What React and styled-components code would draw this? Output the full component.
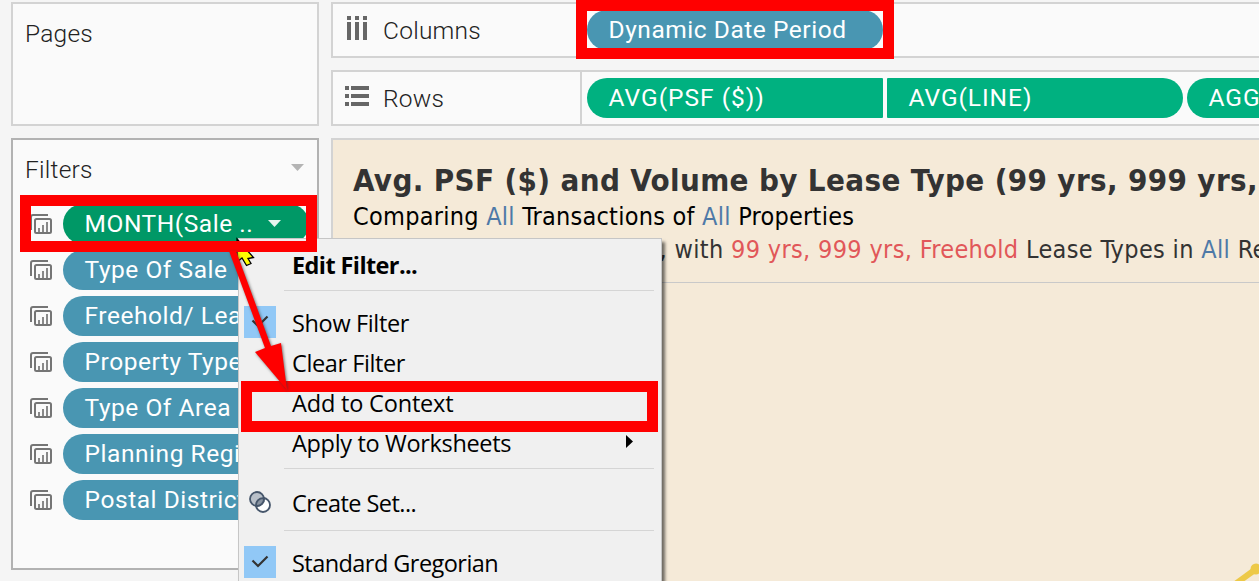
import React from "react";
import styled, { createGlobalStyle, css } from "styled-components";

const RED = "#ff0000";

const Global = createGlobalStyle`
  * { box-sizing: border-box; }
  body { margin: 0; background: #f5f5f5; overflow: hidden; }
`;

const Workspace = styled.div`
  position: relative;
  width: 1259px;
  height: 581px;
  overflow: hidden;
  background: #f5f5f5;
  padding: 2px 0 0 11px;
  display: grid;
  grid-template-columns: 308px 1fr;
  column-gap: 12px;
  white-space: nowrap;
  font-family: Roboto, "Liberation Sans", sans-serif;
`;

const SideColumn = styled.div`
  display: flex;
  flex-direction: column;
  gap: 12px;
`;

const MainColumn = styled.div`
  display: flex;
  flex-direction: column;
  gap: 12px;
  min-width: 0;
`;

const Card = styled.section`
  height: ${(p) => p.$height}px;
  border: 2px solid ${(p) => (p.$active ? "#b2b2b2" : "#d3d3d3")};
  background: #fafafa;
`;

const CardHeader = styled.header`
  display: flex;
  align-items: center;
  justify-content: space-between;
  height: 36px;
  margin-top: ${(p) => p.$top}px;
  padding: 0 13px 0 12px;
  svg { margin-bottom: 5px; }
`;

const Label = styled.span`
  font-size: 24.5px;
  font-weight: 300;
  line-height: 36px;
  letter-spacing: 0.25px;
  color: #222;
`;

const FilterList = styled.div`
  display: flex;
  flex-direction: column;
  gap: 6px;
  margin-top: 16px;
  padding-left: 17px;
`;

const FilterRow = styled.div`
  display: flex;
  align-items: center;
  gap: 11px;
  height: 40px;
`;

const pillColors = { blue: "#4996b2", green: "#00b180", dark: "#009866" };

const Pill = styled.div`
  display: flex;
  align-items: center;
  flex: none;
  gap: 15px;
  width: ${(p) => p.$width}px;
  height: 40px;
  padding: 0 0 1px 21.6px;
  border-radius: ${(p) => p.$radius || "20px"};
  background: ${(p) => pillColors[p.$tone]};
  color: #fff;
  font-size: 24.5px;
  line-height: 39px;
  letter-spacing: ${(p) => p.$track ?? 0.54}px;
`;

const Shelf = styled.section`
  display: flex;
  height: 56px;
  border: 2px solid #d3d3d3;
  border-right: 0;
  background: #fafafa;
`;

const ShelfLabel = styled.div`
  display: flex;
  align-items: center;
  gap: 14px;
  width: 249px;
  flex: none;
  padding: 1px 0 0 12px;
  border-right: 2px solid #d3d3d3;
  svg { margin-top: -6px; }
`;

const ShelfPills = styled.div`
  display: flex;
  align-items: center;
  gap: 4px;
  padding-left: 5px;
`;

const View = styled.section`
  display: flex;
  flex-direction: column;
  height: 460px;
  border: 2px solid #d3d3d3;
  border-right: 0;
  background: #f5ead8;
  font-family: "DejaVu Sans Condensed", "DejaVu Sans", sans-serif;
`;

const TitleBlock = styled.div`
  height: 143px;
  padding: 22px 0 0 20px;
  border-bottom: 1px solid #c9c9c9;
`;

const Title = styled.h1`
  margin: 0;
  font-size: 31px;
  line-height: 37px;
  letter-spacing: 0.36px;
  color: #333;
`;

const Subtitle = styled.p`
  margin: 0;
  font-size: 25px;
  line-height: ${(p) => p.$line}px;
  letter-spacing: ${(p) => p.$track}px;
  color: ${(p) => p.$color};
  padding-left: ${(p) => p.$indent || 0}px;
`;

const Blue = styled.span`color: #4e79a7;`;
const Red = styled.span`color: #e15759;`;

const Plot = styled.div`
  display: flex;
  flex: 1;
  align-items: flex-start;
  justify-content: flex-end;
  padding-top: 279px;
`;

const Menu = styled.div`
  position: absolute;
  left: 238px;
  top: 238px;
  width: 424px;
  height: 380px;
  padding: 6px 7px 0 5px;
  border: 1px solid #c6c6c6;
  background: #f0f0f0;
  box-shadow: 3px 4px 3px rgba(0, 0, 0, 0.55);
  font-family: "Open Sans", "Noto Sans", sans-serif;
  font-size: 23.5px;
  color: #000;
`;

const MenuItem = styled.div`
  display: flex;
  align-items: center;
  height: 40px;
  line-height: 40px;
  letter-spacing: ${(p) => p.$track}px;
  ${(p) => p.$bold && css`font-weight: 700;`}
`;

const MenuIcon = styled.div`
  display: flex;
  align-items: center;
  justify-content: center;
  width: 32px;
  height: 32px;
  margin: 0 16px 2px 0;
  background: ${(p) => (p.$checked ? "#91c8f6" : "transparent")};
`;

const SubmenuArrow = styled.svg`
  margin: 0 21px 3px auto;
`;

const Separator = styled.div`
  height: 1px;
  margin: ${(p) => p.$above}px 0 ${(p) => p.$below}px 40px;
  background: #d5d5d5;
`;

const Highlight = styled.div`
  position: absolute;
  left: ${(p) => p.$x}px;
  top: ${(p) => p.$y}px;
  width: ${(p) => p.$w}px;
  height: ${(p) => p.$h}px;
  border: 11px solid ${RED};
`;

const Overlay = styled.svg`
  position: absolute;
  left: 220px;
  top: 230px;
  overflow: visible;
`;

const ArrowOverlay = styled(Overlay)`
  filter: drop-shadow(1.5px 1px 1.5px rgba(60, 60, 60, 0.7));
`;

const Caret = ({ color }) => (
  <svg width="13" height="7"><path d="M0 0H13L6.5 7Z" fill={color} /></svg>
);

const SheetsIcon = () => (
  <svg width="22" height="20" fill="none" stroke="#757575" strokeWidth="2">
    <path d="M1 16V3Q1 1 3 1H18" />
    <rect x="5" y="5" width="16" height="14" rx="1.5" />
    <path d="M9 18V14M13 18V11M17 18V8" strokeWidth="1.7" />
  </svg>
);

const ColumnsIcon = () => (
  <svg width="24" height="24" fill="#666">
    {[2, 10, 18].map((x) => (
      <path key={x} d={`M${x} 0h4v4h-4zM${x} 6h4v18h-4z`} />
    ))}
  </svg>
);

const RowsIcon = () => (
  <svg width="24" height="20" fill="#666">
    {[0, 8, 16].map((y) => (
      <path key={y} d={`M0 ${y}h4v4h-4zM6 ${y}h18v4h-18z`} />
    ))}
  </svg>
);

const CheckIcon = () => (
  <svg width="18" height="14" fill="none" stroke="#333" strokeWidth="2.2">
    <path d="M1.5 5.5L7 11L16.5 1.5" />
  </svg>
);

const SetIcon = () => (
  <svg width="22" height="22" stroke="#46566b" strokeWidth="1.8">
    <circle cx="14" cy="14" r="7" fill="#fff" />
    <circle cx="8" cy="8" r="7" fill="#b9c0c9" />
    <path d="M14.9 7.1A7 7 0 0 1 7.1 14.9A7 7 0 0 1 14.9 7.1Z" fill="#8993a1" />
  </svg>
);

const filters = [
  { name: "MONTH(Sale ..", tone: "dark", caret: true },
  { name: "Type Of Sale" },
  { name: "Freehold/ Leas.." },
  { name: "Property Type" },
  { name: "Type Of Area" },
  { name: "Planning Region" },
  { name: "Postal District" },
];

export default function App() {
  return (
    <Workspace>
      <Global />
      <SideColumn>
        <Card $height={124}>
          <CardHeader $top={12}><Label>Pages</Label></CardHeader>
        </Card>
        <Card $height={432} $active>
          <CardHeader $top={12}>
            <Label>Filters</Label>
            <Caret color="#b4b4b4" />
          </CardHeader>
          <FilterList>
            {filters.map((f) => (
              <FilterRow key={f.name}>
                <SheetsIcon />
                <Pill $tone={f.tone || "blue"} $width={246}>
                  {f.name}
                  {f.caret && <Caret color="#e6f5ef" />}
                </Pill>
              </FilterRow>
            ))}
          </FilterList>
        </Card>
      </SideColumn>

      <MainColumn>
        <Shelf>
          <ShelfLabel><ColumnsIcon /><Label>Columns</Label></ShelfLabel>
          <ShelfPills>
            <Pill $tone="blue" $width={296}>Dynamic Date Period</Pill>
          </ShelfPills>
        </Shelf>
        <Shelf>
          <ShelfLabel><RowsIcon /><Label>Rows</Label></ShelfLabel>
          <ShelfPills>
            <Pill $tone="green" $width={296} $radius="20px 1px 1px 20px" $track={1}>AVG(PSF ($))</Pill>
            <Pill $tone="green" $width={296} $radius="1px 20px 20px 1px" $track={0.95}>AVG(LINE)</Pill>
            <Pill $tone="green" $width={296} $track={0.9}>AGG</Pill>
          </ShelfPills>
        </Shelf>
        <View>
          <TitleBlock>
            <Title>Avg. PSF ($) and Volume by Lease Type (99 yrs, 999 yrs,</Title>
            <Subtitle $line={35} $track={0.25} $color="#000">
              Comparing <Blue>All</Blue> Transactions of <Blue>All</Blue> Properties
            </Subtitle>
            <Subtitle $line={31} $track={0.34} $color="#333" $indent={306.5}>
              , with <Red>99 yrs, 999 yrs, Freehold</Red> Lease Types in <Blue>All</Blue> Re
            </Subtitle>
          </TitleBlock>
          <Plot>
            <svg width="25" height="20" fill="#edc948">
              <path d="M0 23L22 7" stroke="#edc948" strokeWidth="6" />
              <circle cx="22" cy="7" r="5.5" />
            </svg>
          </Plot>
        </View>
      </MainColumn>

      <Menu>
        <MenuItem $bold $track={-0.6}><MenuIcon />Edit Filter...</MenuItem>
        <Separator $above={5} $below={12} />
        <MenuItem $track={-0.35}><MenuIcon $checked><CheckIcon /></MenuIcon>Show Filter</MenuItem>
        <MenuItem $track={-0.4}><MenuIcon />Clear Filter</MenuItem>
        <MenuItem $track={-0.18}><MenuIcon />Add to Context</MenuItem>
        <MenuItem $track={-0.33}>
          <MenuIcon />Apply to Worksheets
          <SubmenuArrow width="7" height="13"><path d="M0 0L7 6.5L0 13Z" /></SubmenuArrow>
        </MenuItem>
        <Separator $above={5} $below={14} />
        <MenuItem $track={-0.55}><MenuIcon><SetIcon /></MenuIcon>Create Set...</MenuItem>
        <Separator $above={7} $below={12} />
        <MenuItem $track={-0.55}><MenuIcon $checked><CheckIcon /></MenuIcon>Standard Gregorian</MenuItem>
      </Menu>

      <Overlay width="50" height="40">
        <path
          d="M17 9V32L22 28L26.5 35.5L31 33.5L28 28.5L33.5 27.5Z"
          fill="#ffff00" stroke="#000" strokeWidth="1.3"
        />
      </Overlay>
      <Highlight $x={20} $y={195} $w={297} $h={57} />
      <Highlight $x={576} $y={0} $w={318} $h={59} />
      <Highlight $x={241} $y={381} $w={417} $h={51} />
      <ArrowOverlay width="80" height="170">
        <path d="M9 21L45 118L35 122L67 160L61 113L51 116L16 21Z" fill={RED} />
      </ArrowOverlay>
    </Workspace>
  );
}
